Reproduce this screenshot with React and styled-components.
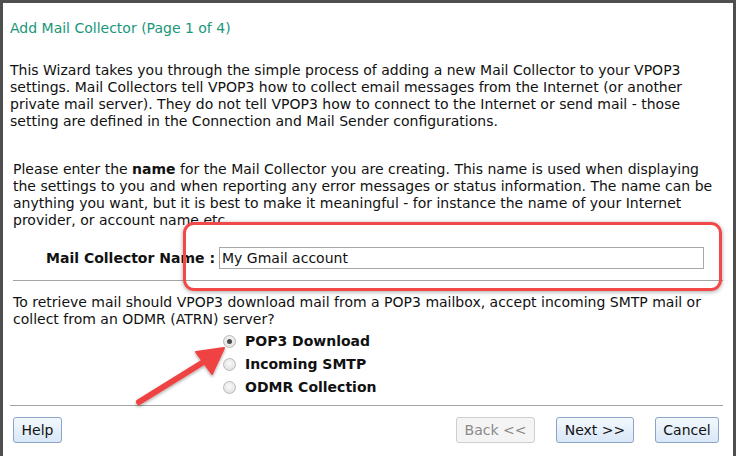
import React, { useState } from 'react';
import styled, { createGlobalStyle } from 'styled-components';

const GlobalStyle = createGlobalStyle`
    html, body {
        margin: 0;
        padding: 0;
        background: #4f4f4f;
        height: 100%;
    }
    #root {
        height: 100%;
    }
`

const Page = styled.div`
    position: relative;
    box-sizing: border-box;
    margin: 3px 3px 0 3px;
    height: calc(100% - 3px);
    background: #fff;
    padding: 0 10px 0 7px;
    font-family: "DejaVu Sans", Verdana, sans-serif;
    font-size: 14px;
    line-height: 17px;
    color: #111;
    overflow: hidden;
`

const Title = styled.div`
    color: #1a9679;
    padding-top: 17px;
`

const Text = styled.p`
    margin: ${props => props.top || 0}px 0 0 ${props => props.indent || 0}px;
`

const NameRow = styled.div`
    display: flex;
    align-items: center;
    margin-top: 18px;
    padding-left: 3px;
`

const Label = styled.label`
    width: 206px;
    text-align: right;
    font-weight: bold;
    padding-right: 4px;
    box-sizing: border-box;
`

const NameInput = styled.input`
    box-sizing: border-box;
    width: 485px;
    height: 22px;
    border: 1px solid #a8a8a8;
    padding: 0 2px;
    font: inherit;
    color: #111;
    outline: none;
`

const Rule = styled.hr`
    border: none;
    border-top: 1px solid #a3a3a3;
    margin: ${props => props.top}px 0 0 ${props => props.indent || 0}px;
`

const Options = styled.div`
    display: flex;
    flex-direction: column;
    gap: 6px;
    margin-top: 5px;
    padding-left: 213px;
`

const Option = styled.label`
    display: flex;
    align-items: center;
    gap: 9px;
    font-weight: bold;
    font-size: 14px;
`

const RadioDot = styled.span`
    box-sizing: border-box;
    width: 13px;
    height: 13px;
    border-radius: 50%;
    border: 1px solid #b9b9b9;
    background: radial-gradient(circle at 50% 40%, #fafafa 0%, #e4e4e4 70%, #d2d2d2 100%);
    display: flex;
    align-items: center;
    justify-content: center;

    &::after {
        content: '';
        width: 5px;
        height: 5px;
        border-radius: 50%;
        background: ${props => props.checked ? '#4a4a4a' : 'transparent'};
    }
`

const ButtonBar = styled.div`
    display: flex;
    align-items: center;
    margin-top: 11px;
    padding: 0 4px 0 3px;
`

const Spacer = styled.div`
    flex: 1;
`

const Button = styled.button`
    box-sizing: border-box;
    height: 26px;
    width: ${props => props.w}px;
    margin-left: ${props => props.gap || 0}px;
    border-radius: 3px;
    border: 1px solid ${props => props.disabled ? '#cfcfcf' : '#8aa5c7'};
    background: ${props => props.disabled
        ? '#f4f4f4'
        : 'linear-gradient(#f3f8fe, #d9e7f7)'};
    color: ${props => props.disabled ? '#8a8a8a' : '#111'};
    font-family: "DejaVu Sans", Verdana, sans-serif;
    font-size: 14px;
    padding: 0;
`

const Highlight = styled.div`
    position: absolute;
    left: 180px;
    top: 219px;
    width: 539px;
    height: 69px;
    box-sizing: border-box;
    border: 3px solid #f24848;
    border-radius: 11px;
    box-shadow: 0 1px 4px rgba(0, 0, 0, 0.35);
    pointer-events: none;
`

const Arrow = styled.svg`
    position: absolute;
    left: 121px;
    top: 331px;
    overflow: visible;
    pointer-events: none;
`

export default function App(){
    const [name, setName] = useState('My Gmail account');
    const [mode, setMode] = useState('pop3');

    const options = [
        ['pop3', 'POP3 Download'],
        ['smtp', 'Incoming SMTP'],
        ['odmr', 'ODMR Collection'],
    ];

    return (
        <>
            <GlobalStyle />
            <Page>
                <Title>Add Mail Collector (Page 1 of 4)</Title>
                <Text top={25}>
                    This Wizard takes you through the simple process of adding a new Mail Collector to your VPOP3
                    settings. Mail Collectors tell VPOP3 how to collect email messages from the Internet (or another
                    private mail server). They do not tell VPOP3 how to connect to the Internet or send mail - those
                    setting are defined in the Connection and Mail Sender configurations.
                </Text>
                <Text top={31} indent={3}>
                    Please enter the <b>name</b> for the Mail Collector you are creating. This name is used when displaying
                    the settings to you and when reporting any error messages or status information. The name can be
                    anything you want, but it is best to make it meaningful - for instance the name of your Internet
                    provider, or account name etc.
                </Text>
                <NameRow>
                    <Label>Mail Collector Name :</Label>
                    <NameInput value={name} onChange={e => setName(e.target.value)} />
                </NameRow>
                <Rule top={11} indent={3} />
                <Text top={13} indent={3}>
                    To retrieve mail should VPOP3 download mail from a POP3 mailbox, accept incoming SMTP mail or
                    collect from an ODMR (ATRN) server?
                </Text>
                <Options>
                    {options.map(([key, label]) => (
                        <Option key={key} onClick={() => setMode(key)}>
                            <RadioDot checked={mode === key} />
                            {label}
                        </Option>
                    ))}
                </Options>
                <Rule top={9} />
                <ButtonBar>
                    <Button w={49}>Help</Button>
                    <Spacer />
                    <Button w={79} disabled>Back &lt;&lt;</Button>
                    <Button w={78} gap={21}>Next &gt;&gt;</Button>
                    <Button w={64} gap={21}>Cancel</Button>
                </ButtonBar>

                <Highlight />
                <Arrow width="110" height="80" viewBox="0 0 110 80">
                    <defs>
                        <filter id="arrowShadow" x="-20%" y="-20%" width="140%" height="140%">
                            <feDropShadow dx="0" dy="1.5" stdDeviation="1.5" floodOpacity="0.35" />
                        </filter>
                    </defs>
                    <g filter="url(#arrowShadow)" fill="#ef4343" stroke="#ef4343">
                        <line x1="15" y1="68" x2="86" y2="24" strokeWidth="6" strokeLinecap="round" />
                        <polygon points="100,14 72,18 88,40" strokeWidth="2" strokeLinejoin="round" />
                    </g>
                </Arrow>
            </Page>
        </>
    );
}
